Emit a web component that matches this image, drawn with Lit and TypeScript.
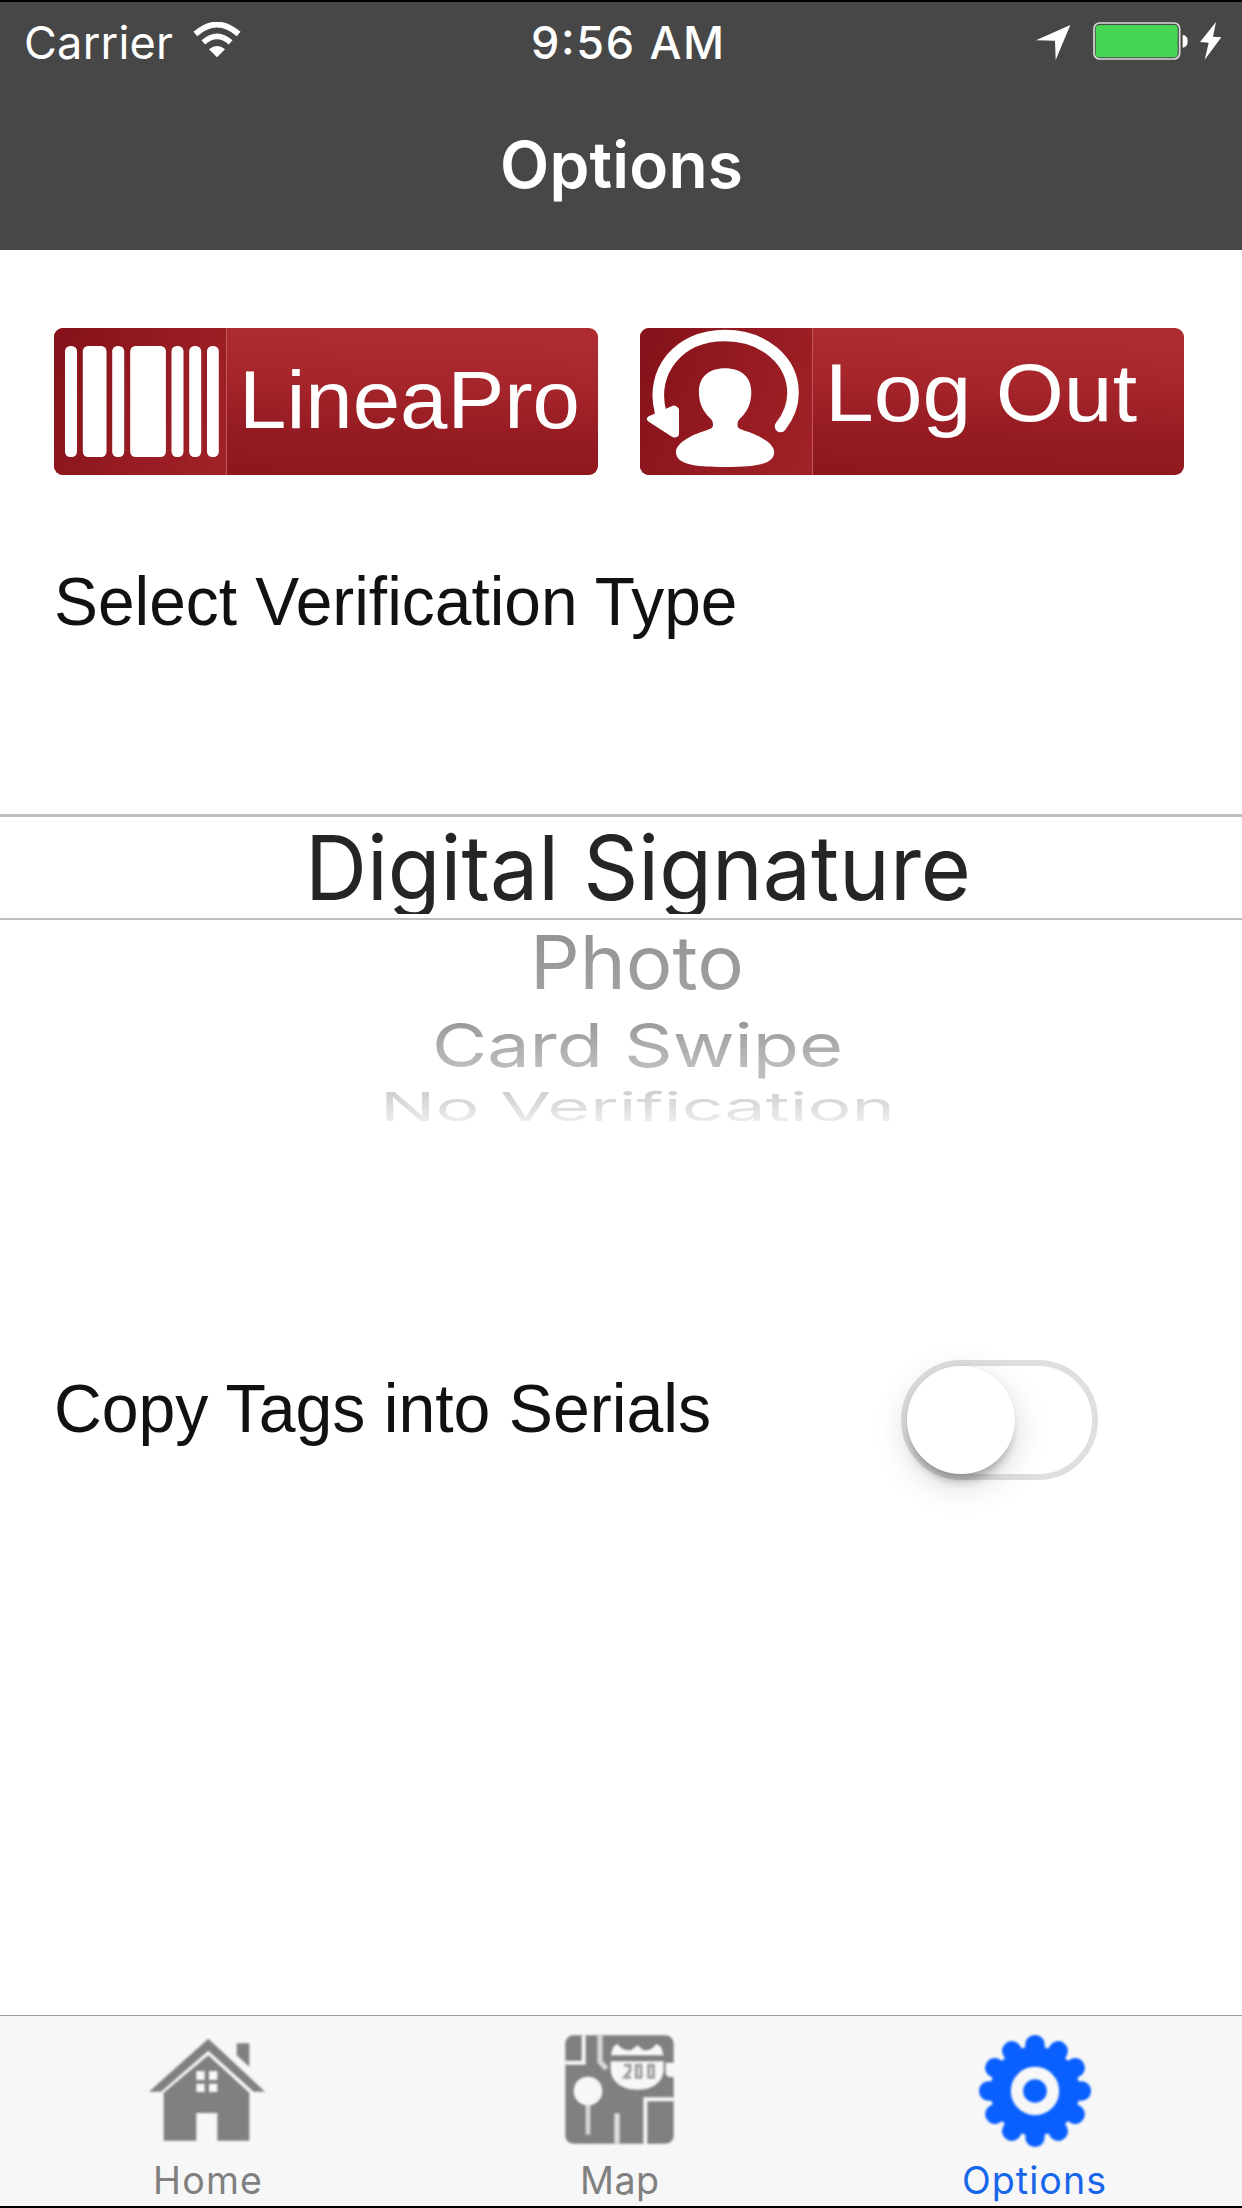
import { LitElement, html, svg, css } from "lit";
import { customElement, state } from "lit/decorators.js";

interface Fit {
  text: string;
  size: number;
  width: number;
  height: number;
  baseline: number;
  spacing?: boolean;
  from?: string;
  to?: string;
}

/* A line of text set to an exact advance width. */
const fitText = (f: Fit, cls = "") => html`
  <svg class="fit ${cls}" width=${f.width} height=${f.height} viewBox="0 0 ${f.width} ${f.height}">
    ${f.from
      ? svg`<defs><linearGradient id="fade" gradientUnits="userSpaceOnUse" x1="0" x2="0"
          y1=${f.baseline - f.size * 0.73} y2=${f.baseline}>
          <stop offset="0" stop-color=${f.from}/><stop offset="1" stop-color=${f.to}/>
        </linearGradient></defs>`
      : ""}
    <text x="0" y=${f.baseline} font-size=${f.size} textLength=${f.width}
      lengthAdjust=${f.spacing ? "spacing" : "spacingAndGlyphs"}
      fill=${f.from ? "url(#fade)" : "currentColor"}>${f.text}</text>
  </svg>
`;

@customElement("picker-row")
class PickerRow extends LitElement {
  static properties = { row: { attribute: false } };
  declare row: Fit;
  static styles = css`
    :host { display: block; }
    .fit { display: block; overflow: visible; font-family: Inter, "Liberation Sans", sans-serif; }
    :host(.selected) .fit { overflow: hidden; }
  `;
  render() {
    return fitText(this.row);
  }
}

@customElement("status-bar")
class StatusBar extends LitElement {
  static styles = css`
    :host { display: flex; align-items: flex-start; height: 76px; color: #fff; font-family: Inter, "Liberation Sans", sans-serif; }
    .fit { display: block; flex: none; overflow: visible; }
    .carrier { margin-left: 24px; }
    .wifi { margin: 20px 0 0 20px; flex: none; }
    .time { margin-left: 290px; font-weight: 500; }
    .arrow { margin: 23px 0 0 312px; flex: none; }
    .battery { margin: 20px 0 0 22px; flex: none; }
    .bolt { margin: 20px 0 0 11px; flex: none; }
  `;
  render() {
    return html`
      ${fitText({ text: "Carrier", size: 45, width: 149, height: 70, baseline: 57, spacing: true }, "carrier")}
      <svg class="wifi" width="48" height="36" viewBox="0 0 144 108" fill="none" stroke="#fff">
        <path d="M7 36 Q72 -21 137 36" stroke-width="17" />
        <path d="M31 61 Q72 25 113 61" stroke-width="17" />
        <path d="M48 82 Q72 62 96 82 L72 106 Z" fill="#fff" stroke="none" />
      </svg>
      ${fitText({ text: "9:56 AM", size: 45, width: 193, height: 70, baseline: 57, spacing: true }, "time")}
      <svg class="arrow" width="35" height="36" viewBox="0 0 105 108"><path d="M0 46 L103 0 L59 105 L57 47 Z" fill="#fff" /></svg>
      <svg class="battery" width="96" height="38" viewBox="0 0 288 114">
        <rect x="3" y="3" width="257" height="108" rx="17" fill="none" stroke="#dcdcdc" stroke-width="5" />
        <rect x="8" y="9" width="246" height="97" rx="11" fill="#46d653" />
        <path d="M269 38 Q284 40 284 57 Q284 75 269 77 Z" fill="#fff" />
      </svg>
      <svg class="bolt" width="22" height="38" viewBox="0 0 66 114"><path d="M48 0 L0 60 L26 62 L14 113 L64 46 L39 44 Z" fill="#fff" /></svg>
    `;
  }
}

@customElement("action-button")
class ActionButton extends LitElement {
  static properties = { icon: {}, label: { attribute: false } };
  declare icon: string;
  declare label: Fit;
  static styles = css`
    :host { display: block; width: 544px; height: 147px; }
    button {
      display: flex; width: 100%; height: 100%; margin: 0; padding: 0; border: 0; border-radius: 9px; overflow: hidden;
      background: linear-gradient(178deg, #ae2c31 8%, #a5252b 38%, #951b22 68%, #8c161c 100%);
      background: linear-gradient(182deg, #ae2c31 8%, #a5252b 38%, #951b22 68%, #8c161c 100%);
      color: #fff; font-family: "Liberation Sans", Arial, sans-serif; text-align: left;
    }
    .icon { flex: none; width: 172px; height: 147px; border-right: 1px solid #c2565b; background: linear-gradient(112deg, #85111a, #951a21 50%, #a12229); }
    .icon svg { display: block; }
    .fit { display: block; flex: none; overflow: visible; margin-left: 12px; }
  `;
  render() {
    const bars = [[11, 12], [28.8, 23.7], [58.2, 12], [76.2, 35.7], [117.5, 12], [135.2, 12], [153, 11.8]];
    const drawing =
      this.icon === "barcode"
        ? svg`${bars.map(([x, w]) => svg`<rect x=${x} y="18" width=${w} height="111" rx="5.2" />`)}`
        : svg`
            <path d="M20.500 84 C10 44 38 7.5 85 7.5 C124 7.5 153 33 153 65 C153 77 149 88 140.500 98.500" fill="none" stroke="#fff" stroke-width="11.6" stroke-linecap="round" />
            <path d="M10 91 L34 80.500 L36 82 L36 106 L34 106.500 Z" stroke="#fff" stroke-width="6" stroke-linejoin="round" />
            <path d="M85 40.300 C101 40.300 111.300 49 111.300 64 C111.300 76 107 84 100.500 90 C98 92.500 97.500 94 97.500 97 C97.500 100 99 100.500 104 102.500
              C121 107.500 134.200 116 134.200 124 C134.200 136 117 139 85 139 C53 139 36 136 36 124 C36 116 49 107.500 66 102.500
              C71 100.500 73 100 73 97 C73 94 72.500 92.500 70 90 C63.500 84 58.900 76 58.900 64 C58.900 49 69 40.300 85 40.300 Z" />`;
    return html`
      <button>
        <span class="icon"><svg width="172" height="147" viewBox="0 0 172 147" fill="#fff">${drawing}</svg></span>
        ${fitText(this.label)}
      </button>
    `;
  }
}

@customElement("toggle-switch")
class ToggleSwitch extends LitElement {
  static styles = css`
    :host { display: flex; box-sizing: border-box; width: 197px; height: 120px; border: 6px solid #dfdfdf; border-radius: 60px; background: #fff; }
    .knob { width: 108px; height: 108px; border-radius: 50%; background: #fff; box-shadow: 0 10px 34px rgba(0, 0, 0, 0.16), 0 11px 10px -4px rgba(0, 0, 0, 0.26), 0 0 2px rgba(0, 0, 0, 0.08); }
  `;
  render() {
    return html`<div class="knob" role="switch" aria-checked="false"></div>`;
  }
}

const homeIcon = html`
  <svg width="116" height="104" viewBox="58 112 348 312" fill="#808080">
    <path d="M58 273 L236 114 L406 273 L372 273 L236 150 L94 273 Z" />
    <path d="M321 128 H359 V198 L321 164 Z" />
    <path fill-rule="evenodd" d="M102 276 L236 164 L359 276 V420 H263 V337 H200 V420 H102 Z M200 211 H225 V238 H200 Z M238 211 H263 V238 H238 Z M200 249 H225 V274 H200 Z M238 249 H263 V274 H238 Z" />
  </svg>
`;

const mapIcon = html`
  <svg width="109" height="109" viewBox="75 104 327 327">
    <rect x="76" y="105" width="325" height="325" rx="24" fill="#808080" />
    <g fill="none" stroke="#f7f7f7" stroke-width="12">
      <path d="M76 187 H131 V105" />
      <path d="M180 105 V184 L200 206" stroke="#d4d4d4" stroke-width="16" />
      <path d="M316 430 V297 H401" />
      <path d="M231 430 V339" stroke="#dedede" stroke-width="16" />
      <path d="M144 300 V403" stroke="#d6d6d6" stroke-width="14" />
    </g>
    <circle cx="144" cy="272" r="43" fill="#f7f7f7" />
    <path d="M377 187 H402 V230 H386 L377 222 Z" fill="#f7f7f7" />
    <path d="M212 165 L220 139 L232 131 Q251 154 274 149 L293 135 L309 149 Q332 154 349 131 L363 139 L371 165 Z" fill="#f7f7f7" />
    <path d="M212 183 H371 V205 C371 234 350 268 293 268 C234 268 212 234 212 205 Z" fill="#f7f7f7" />
    <g fill="none" stroke="#a0a0a0" stroke-width="9">
      <path d="M252 195 H270 V212 L254 231 H273" />
      <rect x="289" y="195" width="14" height="36" />
      <rect x="326" y="195" width="14" height="36" />
    </g>
  </svg>
`;

const gearIcon = html`
  <svg width="114" height="114" viewBox="114 101 342 342" fill="#0a60ff">
    <circle cx="285" cy="272" r="134" />
    ${Array.from({ length: 12 }, (_, i) => svg`<rect x="256" y="104" width="58" height="90" rx="28" transform="rotate(${i * 30} 285 272)" />`)}
    <circle cx="285" cy="272" r="54" fill="none" stroke="#f7f7f7" stroke-width="37" />
  </svg>
`;

@customElement("tab-bar")
class TabBar extends LitElement {
  static styles = css`
    :host {
      display: grid; grid-template-columns: repeat(3, 1fr); box-sizing: border-box; height: 193px;
      border-top: 1px solid #9c9c9c; border-bottom: 2px solid #000; background: #f7f7f7;
      font-family: Inter, "Liberation Sans", sans-serif;
    }
    .tab { display: flex; flex-direction: column; align-items: center; color: #808080; }
    .map-tab, .active-tab { padding-right: 3px; }
    .active { color: #1766ea; }
    .glyph { display: flex; justify-content: center; height: 137px; box-sizing: border-box; padding-top: 19px; filter: blur(1.1px); }
    .home { padding-top: 22px; }
    .active .glyph { padding: 18px 0 0 2px; }
    .fit { display: block; overflow: visible; }
  `;
  render() {
    const tabs = [
      { kind: "home", art: homeIcon, text: "Home", width: 109 },
      { kind: "map", art: mapIcon, text: "Map", width: 79 },
      { kind: "active", art: gearIcon, text: "Options", width: 144 },
    ];
    return tabs.map(
      (t) => html`
        <div class="tab ${t.kind}-tab ${t.kind === "active" ? "active" : ""}">
          <div class="glyph ${t.kind === "active" ? "" : t.kind}">${t.art}</div>
          ${fitText({ text: t.text, size: 37.6, width: t.width, height: 50, baseline: 40.8, spacing: true })}
        </div>
      `
    );
  }
}

@customElement("app-root")
class AppRoot extends LitElement {
  @state() private rows: { cls: string; row: Fit }[] = [
    { cls: "selected", row: { text: "Digital Signature", size: 89, width: 666, height: 97, baseline: 82.7, from: "#252525", to: "#252525" } },
    { cls: "photo", row: { text: "Photo", size: 74, width: 214, height: 78, baseline: 68.6, from: "#949494", to: "#a0a0a0" } },
    { cls: "card", row: { text: "Card Swipe", size: 60, width: 411, height: 78, baseline: 68.6, from: "#9a9a9a", to: "#bdbdbd" } },
    { cls: "none", row: { text: "No Verification", size: 39.5, width: 515, height: 55, baseline: 45.3, from: "#d0d0d0", to: "#ececec" } },
  ];

  static styles = css`
    :host { display: flex; flex-direction: column; box-sizing: border-box; width: 1242px; height: 2208px; border-top: 2px solid #000; background: #fff; overflow: hidden; font-family: "Liberation Sans", Arial, sans-serif; color: #111; }
    .fit { display: block; overflow: visible; }
    .header { flex: none; height: 248px; background: #474747; color: #fff; }
    .title { margin: 46px 0 0 500px; font-family: Inter, "Liberation Sans", sans-serif; font-weight: 600; }
    .main { flex: 1; display: flex; flex-direction: column; }
    .actions { display: flex; gap: 42px; padding: 78px 0 0 54px; }
    .heading { margin: 85px 0 0 53.5px; }
    .picker { display: flex; flex-direction: column; align-items: flex-start; margin-top: 164px; }
    .band { box-sizing: border-box; width: 100%; height: 106px; border-top: 3px solid #bfbfbf; border-bottom: 2px solid #bfbfbf; padding-left: 304.700px; }
    .photo { margin-left: 530px; }
    .card { margin-left: 432px; }
    .none { margin-left: 379.500px; }
    .setting { display: flex; align-items: flex-start; justify-content: space-between; margin-top: 229px; padding: 0 144.500px 0 54px; }
    .setting .fit { margin-top: 1px; }
  `;

  render() {
    const [first, ...rest] = this.rows;
    return html`
      <div class="header">
        <status-bar></status-bar>
        ${fitText({ text: "Options", size: 64, width: 243, height: 80, baseline: 64, spacing: true }, "title")}
      </div>
      <div class="main">
        <div class="actions">
          <action-button icon="barcode" .label=${{ text: "LineaPro", size: 82, width: 341, height: 147, baseline: 100 }}></action-button>
          <action-button icon="logout" .label=${{ text: "Log Out", size: 82, width: 312, height: 147, baseline: 93.3 }}></action-button>
        </div>
        ${fitText({ text: "Select Verification Type", size: 68.8, width: 683.5, height: 90, baseline: 64.5 }, "heading")}
        <div class="picker">
          <div class="band"><picker-row class=${first.cls} .row=${first.row}></picker-row></div>
          ${rest.map((r) => html`<picker-row class=${r.cls} .row=${r.row}></picker-row>`)}
        </div>
        <div class="setting">
          ${fitText({ text: "Copy Tags into Serials", size: 68.8, width: 657, height: 90, baseline: 70.8 })}
          <toggle-switch></toggle-switch>
        </div>
      </div>
      <tab-bar></tab-bar>
    `;
  }
}
